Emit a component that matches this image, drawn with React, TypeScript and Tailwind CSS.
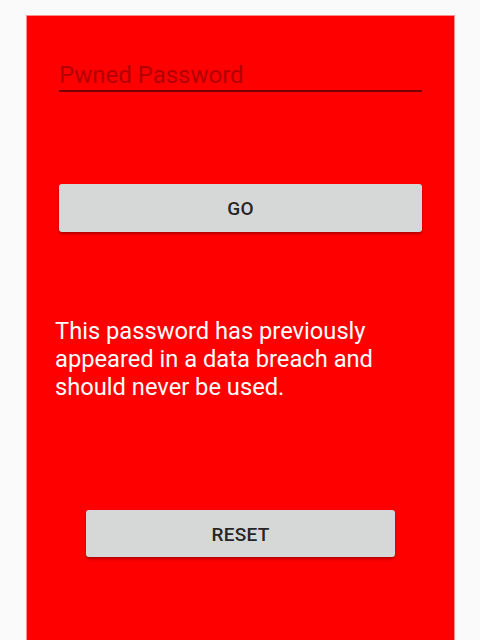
import React from "react";

export default function App() {
  return (
    <div
      className="w-[480px] h-[640px] bg-[#fafafa] overflow-hidden pl-[26px] pr-[25px] pt-[15px]"
      style={{ fontFamily: "Roboto, 'Noto Sans', sans-serif" }}
    >
      <div className="h-[640px] bg-[#ff0000] border border-[#ff8c8c] flex flex-col px-[32px]">
        <input
          type="password"
          placeholder="Pwned Password"
          className="mt-[43px] h-[33px] w-full bg-transparent border-b-2 border-[#7a0000] text-[24px] leading-[28px] text-black placeholder:text-[#b30000] outline-none p-0"
        />
        <button className="mt-[92px] h-[48px] w-full rounded-[3px] bg-[#d6d7d7] shadow-[0_2px_3px_rgba(0,0,0,0.3)] text-[19px] font-medium tracking-[0.3px] text-[#262626] pt-[3px]">
          GO
        </button>
        <p className="mt-[85px] -mx-[4px] text-[23.7px] leading-[28px] text-white">
          This password has previously appeared in a data breach and should never be used.
        </p>
        <div className="mt-[109px] flex justify-center">
          <button className="h-[47px] w-[309px] rounded-[3px] bg-[#d6d7d7] shadow-[0_2px_3px_rgba(0,0,0,0.3)] text-[19px] font-medium tracking-[0.3px] text-[#262626] pt-[3px]">
            RESET
          </button>
        </div>
      </div>
    </div>
  );
}
